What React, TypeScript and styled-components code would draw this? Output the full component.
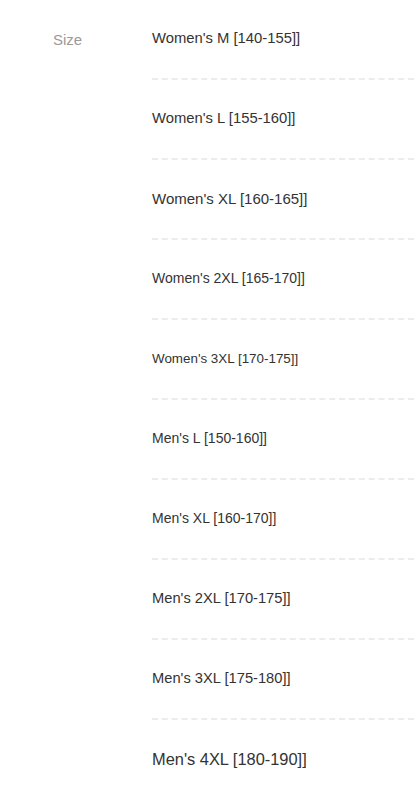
import { createGlobalStyle } from "styled-components";
import styled from "styled-components";

const Global = createGlobalStyle`
  html, body { margin: 0; padding: 0; background: #fff; }
  body { font-family: "Liberation Sans", Arial, sans-serif; }
`;

const Page = styled.div`
  display: grid;
  grid-template-columns: 152px 1fr;
  width: 417px;
`;
const Label = styled.div`
  padding: 31px 0 0 53px;
  font-size: 15px; color: #9a9a9a;
`;
const List = styled.ul`
  list-style: none; margin: 0; padding: 0 3px 0 0;
`;
const Item = styled.li<{ $size: number }>`
  height: 80px;
  display: flex; align-items: center;
  padding-bottom: 2px;
  font-size: ${p => p.$size}px; color: #333;
  border-bottom: 2px dashed #ececec;
  box-sizing: border-box;
  &:last-child { border-bottom: none; }
`;

const sizes: [string, number][] = [
  ["Women's M [140-155]]", 14.8],
  ["Women's L [155-160]]", 14.8],
  ["Women's XL [160-165]]", 15],
  ["Women's 2XL [165-170]]", 14],
  ["Women's 3XL [170-175]]", 13.4],
  ["Men's L [150-160]]", 14],
  ["Men's XL [160-170]]", 14],
  ["Men's 2XL [170-175]]", 14.7],
  ["Men's 3XL [175-180]]", 14.7],
  ["Men's 4XL [180-190]]", 16.4],
];

export default function App() {
  return (
    <Page>
      <Global />
      <Label>Size</Label>
      <List>
        {sizes.map(([t, s]) => (
          <Item key={t} $size={s}>{t}</Item>
        ))}
      </List>
    </Page>
  );
}
